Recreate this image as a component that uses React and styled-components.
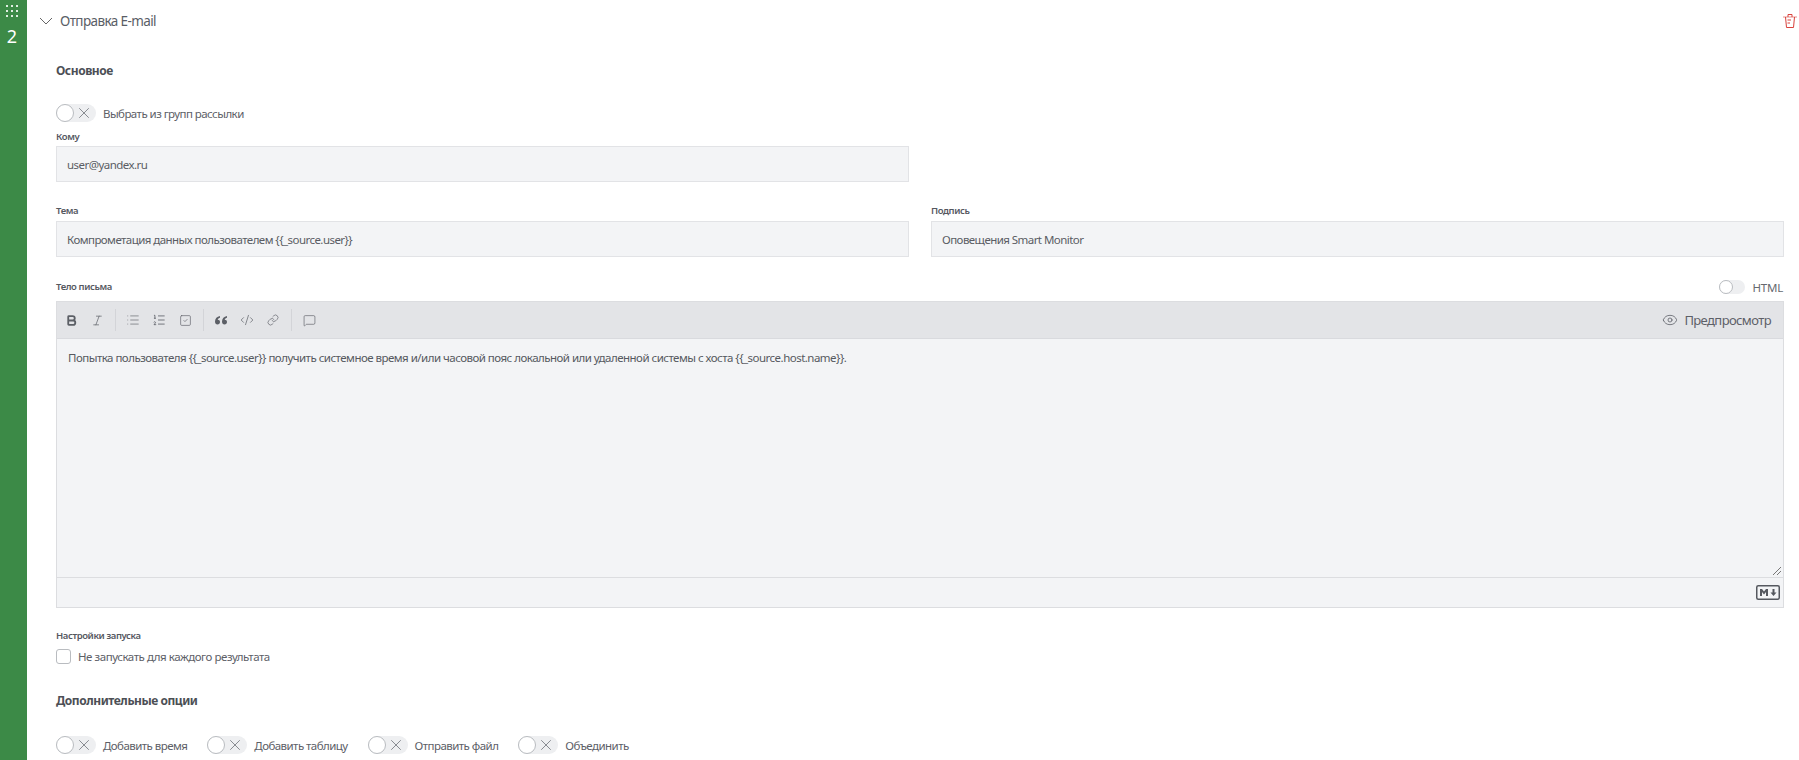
import React from 'react';
import styled, { createGlobalStyle } from 'styled-components';
import { X, Eye, Bold, Italic, List, ListOrdered, SquareCheck, CodeXml, Link, MessageSquare } from 'lucide-react';

const Global = createGlobalStyle`
    html, body {
        margin: 0;
        padding: 0;
        background: #fff;
        height: 100%;
        overflow: hidden;
    }
    body {
        font-family: "Noto Sans", "Open Sans", sans-serif;
        color: #55585f;
    }
`;

const Page = styled.div`
    display: flex;
    height: 760px;
    overflow: hidden;
`;

const Rail = styled.div`
    flex: 0 0 27px;
    box-sizing: border-box;
    background: #3c8a47;
    color: #fff;
    display: flex;
    flex-direction: column;
    align-items: center;
    padding: 5px 3px 0 0;
`;

const Grip = styled.div`
    display: grid;
    grid-template-columns: repeat(3, 2px);
    gap: 3px;
    span {
        width: 2px;
        height: 2px;
        background: #dfeee1;
    }
`;

const RailNumber = styled.div`
    font-size: 18px;
    line-height: 20px;
    margin-top: 9px;
`;

const Main = styled.div`
    flex: 1 1 auto;
    min-width: 0;
    padding: 0 16px 0 12px;
`;

const Header = styled.div`
    display: flex;
    align-items: center;
    height: 42px;
    font-size: 13.5px;
    color: #5a5e66;
`;

const Chevron = styled.svg`
    width: 14px;
    height: 8px;
    margin-right: 7px;
    color: #666;
`;

const HeaderTitle = styled.div`
    flex: 1 1 auto;
    letter-spacing: -0.6px;
`;

const TrashIcon = styled.svg`
    width: 14px;
    height: 14px;
    margin-right: -14px;
    color: #d9423c;
`;

const Content = styled.div`
    padding-left: 17px;
`;

const SectionTitle = styled.div`
    font-size: 12px;
    font-weight: 700;
    color: #4c4f55;
    line-height: 18px;
    letter-spacing: -0.45px;
    margin-top: ${p => p.$top}px;
`;

const ToggleLine = styled.div`
    display: flex;
    align-items: center;
    height: 20px;
    gap: 7px;
    font-size: 11.5px;
    letter-spacing: -0.55px;
    color: #5d6067;
    margin-top: ${p => p.$top || 0}px;
`;

const Track = styled.div`
    position: relative;
    width: ${p => p.$small ? 26 : 40}px;
    height: ${p => p.$small ? 14 : 18}px;
    border-radius: 10px;
    background: #eeeff1;
    flex: 0 0 auto;
    display: flex;
    align-items: center;
    justify-content: flex-end;
    padding-right: 3px;
    box-sizing: border-box;
    color: #666a70;
`;

const Knob = styled.div`
    position: absolute;
    left: 0;
    top: 0;
    box-sizing: border-box;
    width: ${p => p.$small ? 14 : 18}px;
    height: ${p => p.$small ? 14 : 18}px;
    border-radius: 50%;
    background: #fff;
    border: 1px solid #b9bcc0;
`;

const FieldLabel = styled.div`
    font-size: 9.5px;
    font-weight: 600;
    line-height: 12px;
    color: #55585f;
    letter-spacing: -0.4px;
    margin-top: ${p => p.$top || 0}px;
`;

const Row = styled.div`
    display: grid;
    grid-template-columns: 853px 853px;
    column-gap: 22px;
    margin-top: ${p => p.$top || 0}px;
`;

const Input = styled.div`
    box-sizing: border-box;
    height: 36px;
    margin-top: ${p => p.$top || 3}px;
    background: #f3f4f6;
    border: 1px solid #e2e3e6;
    padding: 0 10px;
    display: flex;
    align-items: center;
    font-size: 11.5px;
    letter-spacing: -0.55px;
    color: #5a5d64;
`;

const EditorHead = styled.div`
    display: flex;
    align-items: center;
    justify-content: space-between;
    margin-top: 22px;
    height: 16px;
`;

const HtmlToggle = styled.div`
    display: flex;
    align-items: center;
    gap: 7px;
    font-size: 11.5px;
    letter-spacing: -0.2px;
    color: #66696f;
`;

const Editor = styled.div`
    margin-top: 6px;
    width: 1728px;
    box-sizing: border-box;
    border: 1px solid #dcdde0;
    background: #f3f4f6;
`;

const Toolbar = styled.div`
    display: flex;
    align-items: center;
    height: 36px;
    background: #e3e4e7;
    border-bottom: 1px solid #d9dade;
    padding: 0 12px 0 1px;
    color: #5c5f66;
`;

const ToolBtn = styled.div`
    width: 26px;
    display: flex;
    justify-content: center;
    align-items: center;
`;

const ToolSep = styled.div`
    width: 1px;
    height: 22px;
    background: #d3d4d8;
    margin: 0 4px 0 5px;
`;

const Preview = styled.div`
    margin-left: auto;
    display: flex;
    align-items: center;
    gap: 6px;
    font-size: 13px;
    letter-spacing: -0.6px;
    color: #5d6067;
`;

const EditorBody = styled.div`
    position: relative;
    height: 239px;
    box-sizing: border-box;
    padding: 11px 11px;
    font-size: 11.5px;
    line-height: 16px;
    letter-spacing: -0.52px;
    color: #565960;
    border-bottom: 1px solid #dcdde0;
`;

const Resize = styled.svg`
    position: absolute;
    right: 1px;
    bottom: 1px;
    width: 10px;
    height: 10px;
    color: #777;
`;

const EditorFoot = styled.div`
    height: 29px;
    display: flex;
    align-items: center;
    justify-content: flex-end;
    padding-right: 3px;
`;

const MdBadge = styled.svg`
    width: 24px;
    height: 15px;
    color: #55585f;
`;

const CheckLine = styled.div`
    display: flex;
    align-items: center;
    gap: 7px;
    margin-top: 5px;
    height: 18px;
    font-size: 11.5px;
    letter-spacing: -0.45px;
    color: #5d6067;
`;

const CheckBox = styled.div`
    width: 13px;
    height: 13px;
    box-sizing: content-box;
    border: 1px solid #b9bcc0;
    border-radius: 3px;
    background: #fff;
`;

const Toggles = styled.div`
    display: flex;
    gap: 20px;
    margin-top: 25px;
`;

function Toggle({ children, top }) {
    return (
        <ToggleLine $top={top}>
            <Track>
                <Knob />
                <X size={18} strokeWidth={1} />
            </Track>
            {children}
        </ToggleLine>
    );
}

function QuoteIcon() {
    return (
        <svg width="14" height="12" viewBox="0 0 14 12" fill="currentColor">
            <path d="M6 2C3 2.5 1 4.5 1 7.500C1 9.500 2 10.500 3.500 10.500C5 10.500 6 9.500 6 8C6 6.700 5 5.800 3.700 5.800C4 4.700 4.800 4 6 3.700ZM13 2C10 2.500 8 4.500 8 7.500C8 9.500 9 10.500 10.500 10.500C12 10.500 13 9.500 13 8C13 6.700 12 5.800 10.700 5.800C11 4.700 11.800 4 13 3.700Z" />
        </svg>
    );
}

const kTools = [
    [<Bold size={13} strokeWidth={3.4} key="b" />, <Italic size={13} strokeWidth={1.3} key="i" />],
    [<List size={14} strokeWidth={1.1} key="ul" />, <ListOrdered size={14} strokeWidth={1.4} key="ol" />, <SquareCheck size={13} strokeWidth={1.2} key="ch" />],
    [<QuoteIcon key="q" />, <CodeXml size={14} strokeWidth={1.2} key="c" />, <Link size={12} strokeWidth={1.3} key="l" />],
    [<MessageSquare size={13} strokeWidth={1.2} key="m" />],
];

export default function App() {
    return (
        <Page>
            <Global />
            <Rail>
                <Grip>{Array.from({ length: 9 }, (_, i) => <span key={i} />)}</Grip>
                <RailNumber>2</RailNumber>
            </Rail>
            <Main>
                <Header>
                    <Chevron viewBox="0 0 14 8" fill="none" stroke="currentColor" strokeWidth="1">
                        <path d="M1 1L7 7L13 1" />
                    </Chevron>
                    <HeaderTitle>Отправка E-mail</HeaderTitle>
                    <TrashIcon viewBox="0 0 14 14" fill="none" stroke="currentColor" strokeWidth="1">
                        <path d="M0 3H14" strokeOpacity="0.6" />
                        <path d="M5 3V0.500H9V3" />
                        <path d="M2.500 3L3.500 13.500H10.500L11.500 3" />
                        <path d="M4.500 6H8M4.500 9H7" />
                    </TrashIcon>
                </Header>
                <Content>
                    <SectionTitle $top={20}>Основное</SectionTitle>
                    <Toggle top={23}>Выбрать из групп рассылки</Toggle>
                    <FieldLabel $top={8}>Кому</FieldLabel>
                    <Row>
                        <Input>user@yandex.ru</Input>
                    </Row>
                    <Row $top={23}>
                        <FieldLabel>Тема</FieldLabel>
                        <FieldLabel>Подпись</FieldLabel>
                    </Row>
                    <Row>
                        <Input $top={4}>Компрометация данных пользователем {'{{_source.user}}'}</Input>
                        <Input $top={4}>Оповещения Smart Monitor</Input>
                    </Row>
                    <EditorHead>
                        <FieldLabel>Тело письма</FieldLabel>
                        <HtmlToggle>
                            <Track $small><Knob $small /></Track>
                            HTML
                        </HtmlToggle>
                    </EditorHead>
                    <Editor>
                        <Toolbar>
                            {kTools.map((group, idx) => (
                                <React.Fragment key={idx}>
                                    {idx > 0 && <ToolSep />}
                                    {group.map((icon, idx2) => <ToolBtn key={idx2}>{icon}</ToolBtn>)}
                                </React.Fragment>
                            ))}
                            <Preview>
                                <Eye size={16} strokeWidth={1.2} />
                                Предпросмотр
                            </Preview>
                        </Toolbar>
                        <EditorBody>
                            Попытка пользователя {'{{_source.user}}'} получить системное время и/или часовой пояс локальной или удаленной системы с хоста {'{{_source.host.name}}'}.
                            <Resize viewBox="0 0 10 10" stroke="currentColor" strokeWidth="1" fill="none">
                                <path d="M1 9L9 1M5 9L9 5" />
                            </Resize>
                        </EditorBody>
                        <EditorFoot>
                            <MdBadge viewBox="0 0 24 15">
                                <rect x="0.750" y="0.750" width="22.500" height="13.500" rx="1.500" fill="none" stroke="currentColor" strokeWidth="1.500" />
                                <path d="M4 11V4H6L8 6.500L10 4H12V11H10V7L8 9.500L6 7V11ZM16.500 4H18.500V7.500H20.500L17.500 11L14.500 7.500H16.500Z" fill="currentColor" />
                            </MdBadge>
                        </EditorFoot>
                    </Editor>
                    <FieldLabel $top={22}>Настройки запуска</FieldLabel>
                    <CheckLine>
                        <CheckBox />
                        Не запускать для каждого результата
                    </CheckLine>
                    <SectionTitle $top={27}>Дополнительные опции</SectionTitle>
                    <Toggles>
                        <Toggle>Добавить время</Toggle>
                        <Toggle>Добавить таблицу</Toggle>
                        <Toggle>Отправить файл</Toggle>
                        <Toggle>Объединить</Toggle>
                    </Toggles>
                </Content>
            </Main>
        </Page>
    );
}
